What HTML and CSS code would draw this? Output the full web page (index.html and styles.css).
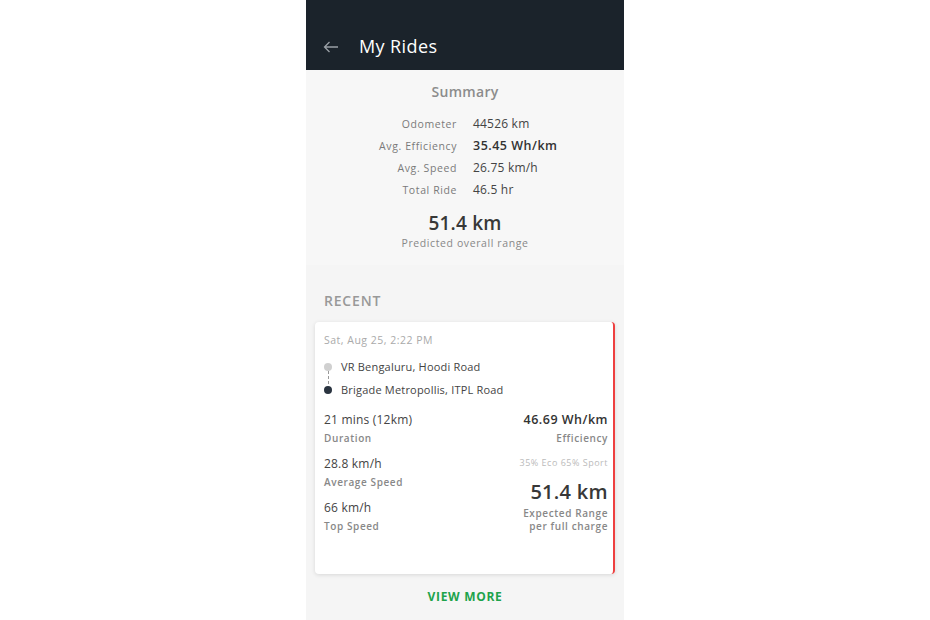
FILE: index.html
```html
<!DOCTYPE html>
<html>
<head>
<meta charset="utf-8">
<link rel="stylesheet" href="styles.css">
</head>
<body>
<div class="phone">
  <header class="topbar">
    <svg class="back" width="16" height="12" viewBox="0 0 16 12"><path d="M15 6H1.5M6.5 1L1.5 6l5 5" fill="none" stroke="#9aa0a6" stroke-width="1.3"/></svg>
    <span class="title">My Rides</span>
  </header>
  <section class="summary">
    <div class="sum-title">Summary</div>
    <div class="stats">
      <div class="lbl">Odometer</div><div class="val">44526 km</div>
      <div class="lbl">Avg. Efficiency</div><div class="val strong">35.45 Wh/km</div>
      <div class="lbl">Avg. Speed</div><div class="val">26.75 km/h</div>
      <div class="lbl">Total Ride</div><div class="val">46.5 hr</div>
    </div>
    <div class="big">51.4 km</div>
    <div class="big-sub">Predicted overall range</div>
  </section>
  <div class="recent">RECENT</div>
  <div class="card">
    <div class="date">Sat, Aug 25, 2:22 PM</div>
    <div class="route">
      <div class="stop"><span class="dot from"></span>VR Bengaluru, Hoodi Road</div>
      <div class="stop"><span class="dot to"></span>Brigade Metropollis, ITPL Road</div>
    </div>
    <div class="cols">
      <div class="col">
        <div class="v">21 mins (12km)</div><div class="l">Duration</div>
        <div class="v">28.8 km/h</div><div class="l">Average Speed</div>
        <div class="v">66 km/h</div><div class="l">Top Speed</div>
      </div>
      <div class="col right">
        <div class="v strong">46.69 Wh/km</div><div class="l">Efficiency</div>
        <div class="mode">35% Eco 65% Sport</div>
        <div class="range">51.4 km</div>
        <div class="l two">Expected Range<br>per full charge</div>
      </div>
    </div>
  </div>
  <div class="more">VIEW MORE</div>
</div>
</body>
</html>
```
FILE: styles.css
```css
html, body { margin: 0; padding: 0; background: #fff; }
body { display: flex; justify-content: center; font-family: "Open Sans", "Liberation Sans", sans-serif; }
.phone { width: 318px; height: 620px; background: #f5f5f5; overflow: hidden; }
.topbar { height: 70px; background: #1b232b; display: flex; align-items: flex-end; padding: 0 0 12px 17px; box-sizing: border-box; }
.back { margin-bottom: 5px; }
.title { color: #fff; font-size: 18px; margin-left: 20px; letter-spacing: 0.4px; line-height: 24px; }
.summary { background: #f7f7f7; padding: 13px 0 17px; text-align: center; height: 195px; box-sizing: border-box; }
.sum-title { color: #8c8c8c; font-size: 14px; font-weight: 600; line-height: 18px; letter-spacing: 0.3px; }
.stats { display: grid; grid-template-columns: 151px 1fr; column-gap: 16px; margin-top: 12px; }
.lbl { text-align: right; color: #7a7a7a; font-size: 10.5px; line-height: 22px; letter-spacing: 0.6px; }
.val { text-align: left; color: #444; font-size: 12px; line-height: 22px; letter-spacing: 0.2px; }
.val.strong { font-weight: 600; color: #333; font-size: 12.5px; letter-spacing: 0.5px; }
.big { font-size: 19px; font-weight: 600; color: #383838; margin-top: 9px; line-height: 26px; letter-spacing: 0.2px; }
.big-sub { color: #888; font-size: 10.5px; line-height: 14px; letter-spacing: 0.6px; }
.recent { color: #999; font-size: 14px; font-weight: 600; padding: 27px 0 0 18px; line-height: 18px; letter-spacing: 0.8px; }
.card { margin: 12px 9px 0 9px; height: 252px; background: #fff; border-radius: 4px; border-right: 2px solid #ee4040; box-shadow: 0 1px 4px rgba(0,0,0,0.12); padding: 11px 5px 0 9px; box-sizing: border-box; }
.date { color: #aaa; font-size: 10.5px; line-height: 14px; letter-spacing: 0.5px; }
.route { margin-top: 8px; position: relative; }
.stop { display: flex; align-items: center; color: #444; font-size: 11px; line-height: 23px; letter-spacing: 0.2px; }
.dot { width: 8px; height: 8px; border-radius: 50%; margin-right: 9px; margin-left: 0; }
.dot.from { background: #d0d0d0; }
.dot.to { background: #2a3440; }
.route::before { content: ""; position: absolute; left: 3.5px; top: 16px; height: 13px; border-left: 1px dashed #999; }
.cols { display: flex; justify-content: space-between; margin-top: 10px; }
.col .v { color: #444; font-size: 12px; line-height: 18px; letter-spacing: 0.2px; }
.col .v.strong { font-weight: 600; color: #333; font-size: 12.5px; letter-spacing: 0.5px; }
.col .l { color: #888; font-size: 10px; font-weight: 600; line-height: 14px; margin: 2px 0 10px; letter-spacing: 0.6px; }
.right { text-align: right; }
.mode { color: #bbb; font-size: 9px; line-height: 12px; margin-top: 12px; letter-spacing: 0.5px; }
.range { font-size: 20px; font-weight: 600; color: #383838; line-height: 26px; margin-top: 10px; letter-spacing: 0.3px; }
.col .l.two { line-height: 13px; margin-top: 2px; }
.more { text-align: center; color: #1da34b; font-weight: 700; font-size: 12px; letter-spacing: 0.7px; margin-top: 15px; line-height: 16px; }
```
